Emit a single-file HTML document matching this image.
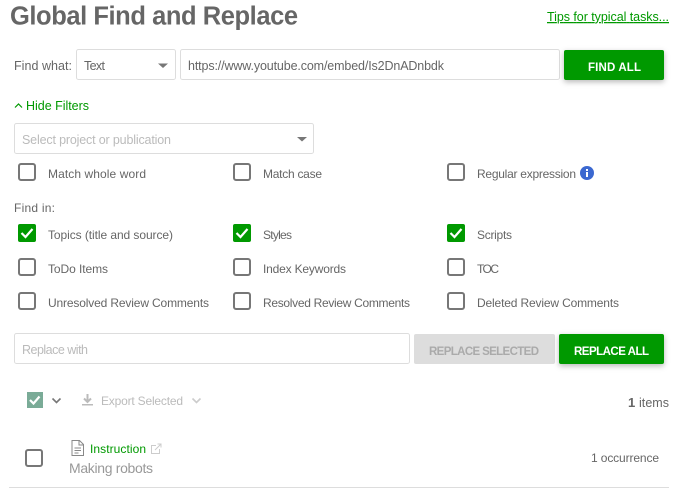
<!DOCTYPE html>
<html><head><meta charset="utf-8"><style>
html,body{margin:0;padding:0;background:#fff;width:680px;height:496px;overflow:hidden}
svg{display:block}
text{font-family:"Liberation Sans",Arial,sans-serif;font-size:12px;fill:#666}
.g{fill:#090}.p{fill:#bbb}
.b{font-weight:bold;fill:#fff;font-size:11.5px}
.cb{fill:#fff;stroke:#777;stroke-width:2}
.cg{fill:#090}
.ck{fill:none;stroke:#fff;stroke-width:2.2}
.bx{fill:#fff;stroke:#ddd;stroke-width:1}
</style></head><body>
<svg width="680" height="496" viewBox="0 0 680 496" xmlns="http://www.w3.org/2000/svg">
<defs>
<filter id="s" x="-20%" y="-30%" width="140%" height="170%"><feDropShadow dx="0" dy="2" stdDeviation="3" flood-color="#000" flood-opacity=".28"/></filter>
</defs>
<text x="10" y="24.5" textLength="288" lengthAdjust="spacing" style="font-size:25.500px;font-weight:bold;fill:#666">Global Find and Replace</text>
<text x="547" y="21" textLength="122" lengthAdjust="spacing" class="g" text-decoration="underline" style="font-size:12.500px">Tips for typical tasks...</text>

<text x="14" y="70" textLength="58" lengthAdjust="spacing" style="font-size:12.500px">Find what:</text>
<rect class="bx" x="76.5" y="49.5" width="99" height="30" rx="2"/>
<text x="84" y="70" textLength="21" lengthAdjust="spacing" style="font-size:12.500px">Text</text>
<path d="M158 63.5h10l-5 4.5z" fill="#777"/>
<rect class="bx" x="180.5" y="49.5" width="379" height="30" rx="2"/>
<text x="188" y="70" textLength="256" lengthAdjust="spacing" style="font-size:12.500px">https://www.youtube.com/embed/Is2DnADnbdk</text>
<rect x="564" y="50" width="100" height="30" rx="2" fill="#090" filter="url(#s)"/>
<text class="b" x="588" y="71" textLength="53" lengthAdjust="spacing">FIND ALL</text>

<path d="M15 107.5l3.5-3.5 3.5 3.5" fill="none" stroke="#090" stroke-width="1.2"/>
<text class="g" x="26" y="110" textLength="63" lengthAdjust="spacing" style="font-size:12.500px">Hide Filters</text>

<rect class="bx" x="14.5" y="123.5" width="299" height="30" rx="2"/>
<text class="p" x="22" y="144" textLength="149" lengthAdjust="spacing" style="font-size:12.500px">Select project or publication</text>
<path d="M297 137h10l-5 4.5z" fill="#777"/>

<!-- row 1 -->
<rect class="cb" x="19" y="164" width="16" height="16" rx="2"/>
<text x="48" y="178" textLength="98" lengthAdjust="spacing">Match whole word</text>
<rect class="cb" x="234" y="164" width="16" height="16" rx="2"/>
<text x="263" y="178" textLength="59" lengthAdjust="spacing">Match case</text>
<rect class="cb" x="448" y="164" width="16" height="16" rx="2"/>
<text x="477" y="178" textLength="99" lengthAdjust="spacing">Regular expression</text>
<circle cx="587" cy="173" r="7" fill="#3b68d0"/>
<rect x="586" y="172" width="2" height="5" fill="#fff"/><rect x="586" y="169" width="2" height="2" fill="#fff"/>

<text x="14" y="212" textLength="41" lengthAdjust="spacing">Find in:</text>

<!-- row 2 -->
<rect class="cg" x="18" y="224" width="18" height="18" rx="2"/>
<path class="ck" d="M21.5 233l4 4 7-8"/>
<text x="48" y="239" textLength="125" lengthAdjust="spacing">Topics (title and source)</text>
<rect class="cg" x="233" y="224" width="18" height="18" rx="2"/>
<path class="ck" d="M236.500 233l4 4 7-8"/>
<text x="263" y="239" textLength="29" lengthAdjust="spacing">Styles</text>
<rect class="cg" x="447" y="224" width="18" height="18" rx="2"/>
<path class="ck" d="M450.500 233l4 4 7-8"/>
<text x="477" y="239" textLength="35" lengthAdjust="spacing">Scripts</text>

<!-- row 3 -->
<rect class="cb" x="19" y="259" width="16" height="16" rx="2"/>
<text x="48" y="273" textLength="60" lengthAdjust="spacing">ToDo Items</text>
<rect class="cb" x="234" y="259" width="16" height="16" rx="2"/>
<text x="263" y="273" textLength="83" lengthAdjust="spacing">Index Keywords</text>
<rect class="cb" x="448" y="259" width="16" height="16" rx="2"/>
<text x="477" y="273" textLength="22" lengthAdjust="spacing">TOC</text>

<!-- row 4 -->
<rect class="cb" x="19" y="293" width="16" height="16" rx="2"/>
<text x="48" y="307" textLength="161" lengthAdjust="spacing">Unresolved Review Comments</text>
<rect class="cb" x="234" y="293" width="16" height="16" rx="2"/>
<text x="263" y="307" textLength="147" lengthAdjust="spacing">Resolved Review Comments</text>
<rect class="cb" x="448" y="293" width="16" height="16" rx="2"/>
<text x="477" y="307" textLength="142" lengthAdjust="spacing">Deleted Review Comments</text>

<!-- replace -->
<rect class="bx" x="14.500" y="333.500" width="395" height="30" rx="2"/>
<text class="p" x="22" y="354" textLength="66" lengthAdjust="spacing" style="font-size:12.500px">Replace with</text>
<rect x="414" y="334" width="141" height="30" rx="2" fill="#ddd"/>
<text class="b" x="429" y="355" textLength="110" lengthAdjust="spacing" style="fill:#aaa">REPLACE SELECTED</text>
<rect x="559" y="334" width="105" height="30" rx="2" fill="#090" filter="url(#s)"/>
<text class="b" x="574" y="355" textLength="75" lengthAdjust="spacing">REPLACE ALL</text>

<!-- toolbar -->
<rect x="27" y="392" width="16" height="16" fill="#7aab97"/>
<path d="M30 400l3.500 3.500 6-7" fill="none" stroke="#fff" stroke-width="2.200"/>
<path d="M52.500 398.500l4 4 4-4" fill="none" stroke="#777" stroke-width="1.600"/>
<path d="M87.500 394v7M84 398.500l3.500 3.500 3.500-3.500" fill="none" stroke="#bbb" stroke-width="2"/>
<rect x="82" y="404" width="11" height="1.500" fill="#bbb"/>
<text class="p" x="101" y="405" textLength="82" lengthAdjust="spacing">Export Selected</text>
<path d="M192.500 398.500l4 4 4-4" fill="none" stroke="#ccc" stroke-width="1.600"/>
<text x="628" y="407" style="font-weight:bold;font-size:13px">1</text>
<text x="639" y="407" textLength="30" lengthAdjust="spacing" style="font-size:12.500px">items</text>

<!-- result -->
<rect class="cb" x="26" y="450" width="16" height="16" rx="2"/>
<path d="M72 440.500h7.500l4 4v11h-11.500zM79 441v4h4M74.500 448h6.500M74.500 450.500h6.500M74.500 453h4" fill="none" stroke="#888" stroke-width="1"/>
<text class="g" x="90" y="453" textLength="56" lengthAdjust="spacing">Instruction</text>
<path d="M156 445.500h-4.500v8h8v-4.500M155 450l6-6M157.500 444h3.500v3.500" fill="none" stroke="#ccc" stroke-width="1"/>
<text x="69" y="473" textLength="84" lengthAdjust="spacing" style="fill:#999;font-size:14px">Making robots</text>
<text x="591" y="462" textLength="68" lengthAdjust="spacing">1 occurrence</text>
<rect x="9" y="487" width="660" height="1" fill="#ddd"/>
</svg>
</body></html>
